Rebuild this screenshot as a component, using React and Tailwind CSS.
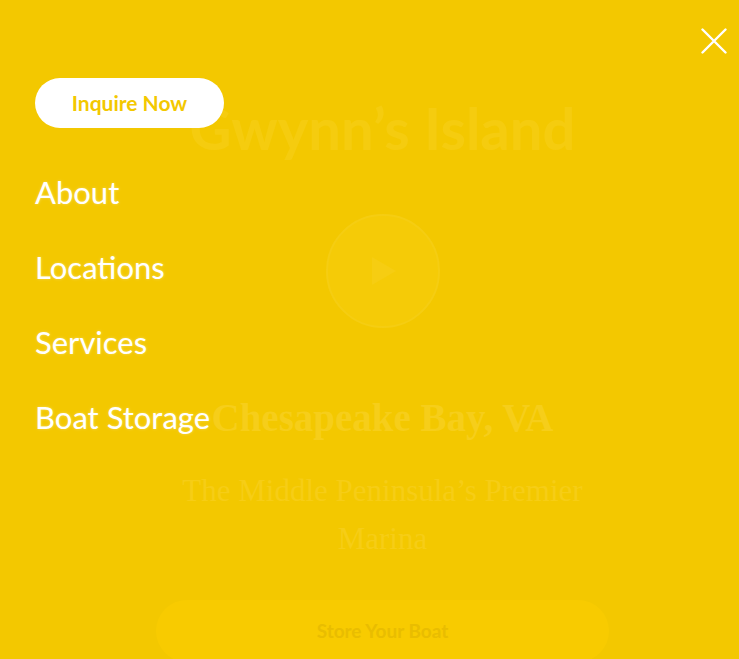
import React from "react";

export default function App() {
  return (
    <div className="relative w-full h-[659px] overflow-hidden bg-[#f3c800]">
      {/* underlying page, faintly visible through the menu overlay */}
      <div className="flex flex-col items-center pt-[96px] pl-[26px]">
        <h1 className="h-[64px] text-[58px] leading-[64px] font-bold text-[#f5cc0f] [font-family:Lato,'Liberation_Sans',sans-serif] whitespace-nowrap">
          Gwynn’s Island
        </h1>
        <div className="mt-[54px] w-[114px] h-[114px] rounded-full bg-[#f5cb07] border-2 border-[#f5cd12] flex items-center justify-center">
          <svg width="30" height="34" viewBox="0 0 30 34">
            <path d="M4 3 L28 17 L4 31 Z" fill="#f6cd12" />
          </svg>
        </div>
        <h2 className="mt-[66px] text-[39px] leading-[48px] font-bold text-[#f6ce1a] [font-family:'Liberation_Serif',serif] whitespace-nowrap">
          Chesapeake Bay, VA
        </h2>
        <p className="mt-[25px] text-[31px] leading-[48px] text-center text-[#f6cd16] [font-family:'Liberation_Serif',serif] whitespace-nowrap">
          The Middle Peninsula’s Premier
          <br />
          Marina
        </p>
        <div className="mt-[37px] shrink-0 w-[453px] h-[62px] rounded-full bg-[#f8cb00] flex items-center justify-center">
          <span className="text-[19px] font-bold text-[#e9bd00] [font-family:Lato,'Liberation_Sans',sans-serif]">
            Store Your Boat
          </span>
        </div>
      </div>

      {/* menu overlay */}
      <div className="absolute inset-0">
        <button className="absolute top-[28px] right-[12px] w-[26px] h-[26px] flex items-center justify-center">
          <svg width="26" height="26" viewBox="0 0 26 26">
            <path d="M1.5 1.5 L24.5 24.5 M24.5 1.5 L1.5 24.5" stroke="#ffffff" strokeWidth="2.4" strokeLinecap="round" />
          </svg>
        </button>
        <div className="flex flex-col items-start pl-[35px] pt-[78px]">
          <button className="w-[189px] h-[50px] rounded-full bg-white flex items-center justify-center">
            <span className="text-[21px] font-bold text-[#f3c800] [font-family:Lato,'Liberation_Sans',sans-serif]">
              Inquire Now
            </span>
          </button>
          <nav className="mt-[44px] flex flex-col gap-[35px]">
            {["About", "Locations", "Services", "Boat Storage"].map((t) => (
              <a
                key={t}
                className="text-[31px] leading-[40px] text-white [font-family:Lato,'Liberation_Sans',sans-serif] [text-shadow:0_0_3px_rgba(255,255,255,0.35)]"
              >
                {t}
              </a>
            ))}
          </nav>
        </div>
      </div>
    </div>
  );
}
